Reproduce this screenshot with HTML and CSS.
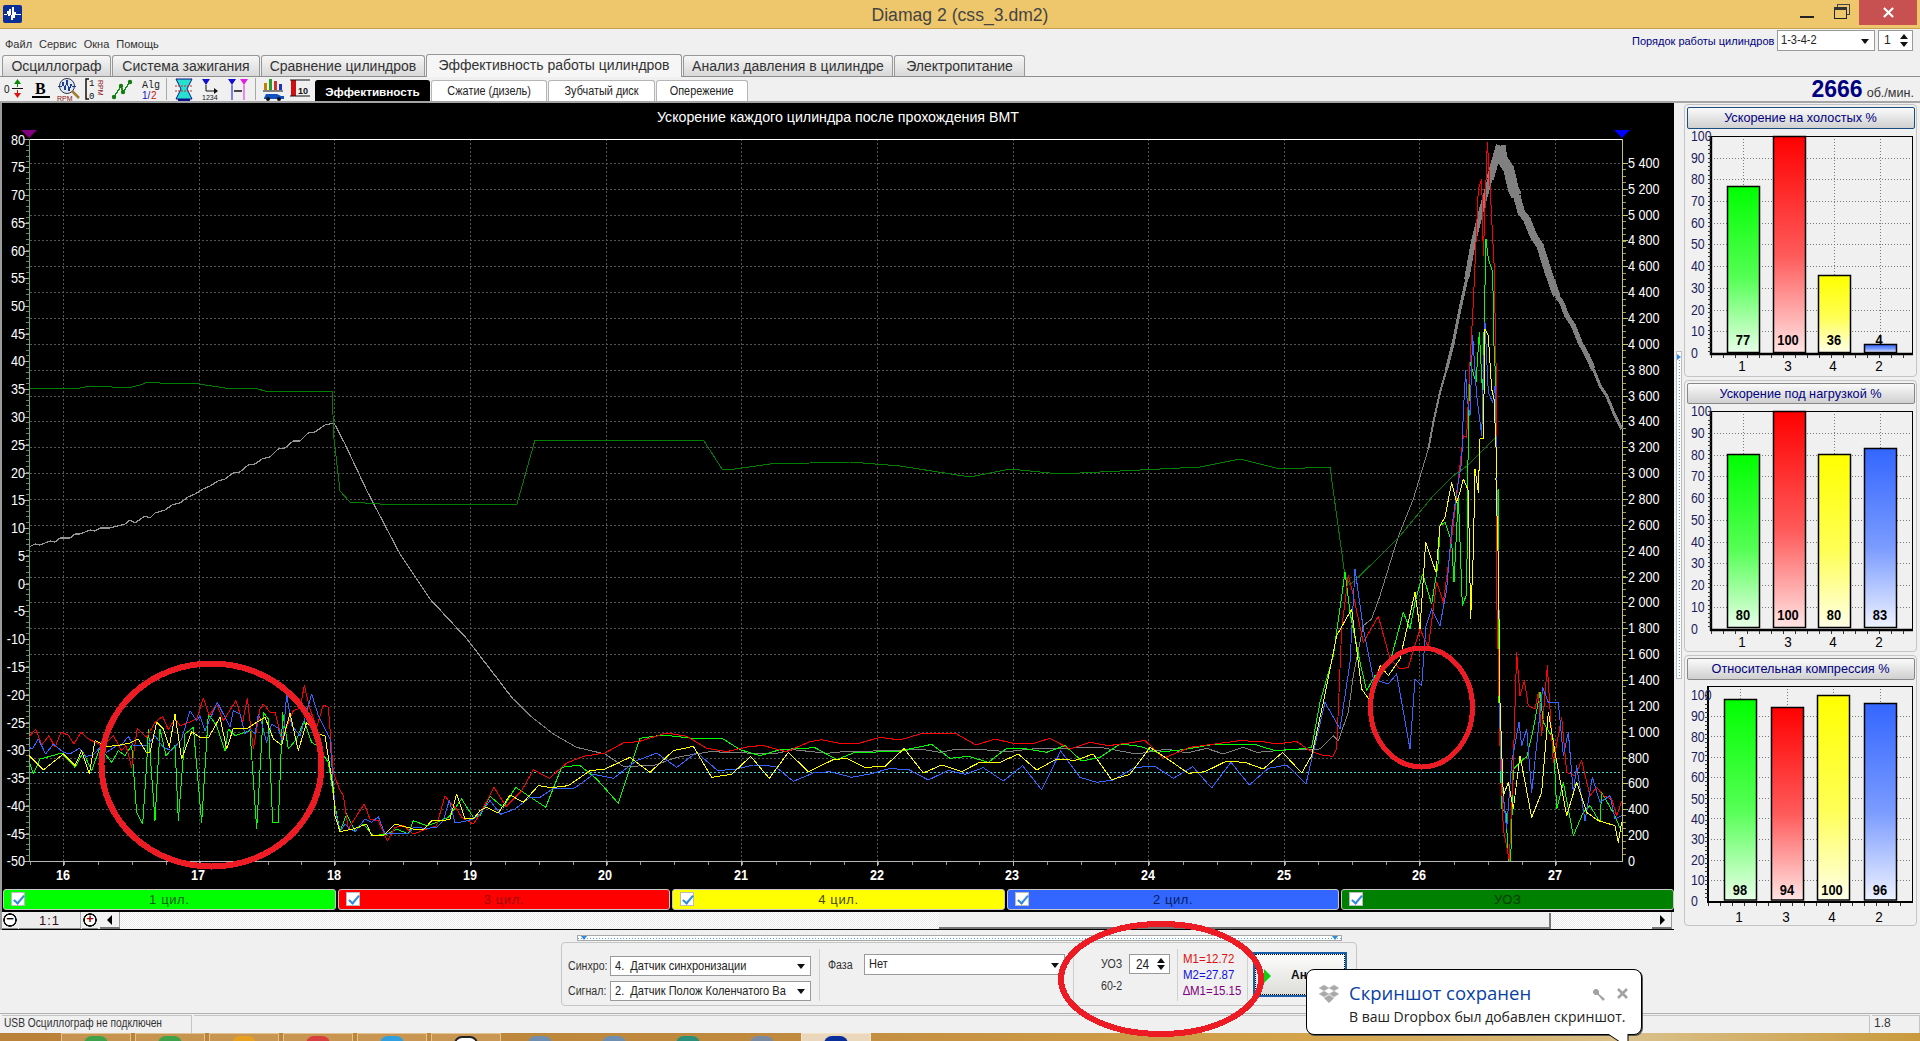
FILE: index.html
```html
<!DOCTYPE html>
<html lang="ru">
<head>
<meta charset="utf-8">
<title>Diamag 2 (css_3.dm2)</title>
<link rel="stylesheet" href="styles.css">
</head>
<body>
<div class="window">
  <header class="titlebar">
    <div class="title-left">
      <svg class="app-icon" viewBox="0 0 19 18"><rect width="19" height="18" rx="2" fill="#0a2f9a"/><polyline class="ico-wave" points="1,9 4,9 5,6 6,11 7,4 9,15 10,2 11,13 12,7 13,10 15,9 18,9"/></svg>
    </div>
    <div class="title-text">Diamag 2 (css_3.dm2)</div>
    <div class="win-controls">
      <span class="win-min"></span>
      <svg class="win-restore" viewBox="0 0 16 15"><rect x="3.5" y="0.5" width="12" height="10" fill="none" stroke="#444"/><rect x="0.5" y="3.5" width="12" height="11" fill="#eec76c" stroke="#222" stroke-width="1"/><rect x="0" y="3" width="13" height="3" fill="#333"/></svg>
      <span class="win-close"><svg viewBox="0 0 12 12"><path d="M1 1 11 11M11 1 1 11" stroke="#fff" stroke-width="2.4"/></svg></span>
    </div>
  </header>

  <div class="menubar">
    <nav class="menu"><span>Файл</span><span>Сервис</span><span>Окна</span><span>Помощь</span></nav>
    <div class="order">
      <span class="order-label">Порядок работы цилиндров</span>
      <div class="combo combo-order"><span class="nr">1-3-4-2</span></div>
      <div class="spin spin-order">1</div>
    </div>
  </div>

  <div class="tabs">
    <span class="tab t1">Осциллограф</span>
    <span class="tab t2">Система зажигания</span>
    <span class="tab t3">Сравнение цилиндров</span>
    <span class="tab t4 active">Эффективность работы цилиндров</span>
    <span class="tab t5">Анализ давления в цилиндре</span>
    <span class="tab t6">Электропитание</span>
  </div>

  <div class="toolbar">
    <svg class="tb-icon" viewBox="0 0 24 24"><text x="2" y="16" class="ic-t">0</text><path d="M10 11.500H21" stroke="#111"/><path d="M15.500 2 12 7H19Z" fill="#0a8a0a"/><path d="M15.500 10V5" stroke="#0a8a0a"/><path d="M15.500 21 12 16H19Z" fill="#e01010"/><path d="M15.500 13V17" stroke="#e01010"/></svg>
    <svg class="tb-icon" viewBox="0 0 24 24"><text x="6" y="17" class="ic-b">B</text><rect x="3" y="19" width="18" height="2" fill="#000"/></svg>
    <svg class="tb-icon" viewBox="0 0 24 24"><circle cx="11" cy="9" r="7.500" fill="#dfe8f5" stroke="#334"/><polyline class="ico-line" points="2,9 6,9 7,5 9,13 11,3 13,14 15,7 16,9 20,9"/><path d="M16 14 23 21" stroke="#a08030" stroke-width="2.5"/><text x="1" y="24" class="ic-r">RPM</text></svg>
    <svg class="tb-icon" viewBox="0 0 24 24"><path d="M6 2H3V22H6" fill="none" stroke="#111" stroke-width="1.5"/><text x="6" y="9" class="ic-s">1</text><text x="6" y="22" class="ic-s">0</text><text x="15" y="3" class="ic-v" transform="rotate(90 15 3)">RPM</text></svg>
    <svg class="tb-icon" viewBox="0 0 24 24"><polyline class="ico-green" points="4,20 11,9 13,15 20,5"/><circle cx="4" cy="20" r="2.200" fill="#137a13"/><circle cx="11" cy="9" r="2.200" fill="#137a13"/><circle cx="13" cy="15" r="2.200" fill="#137a13"/><circle cx="20" cy="5" r="2.200" fill="#137a13"/></svg>
    <svg class="tb-icon" viewBox="0 0 24 24"><text x="5" y="11" class="ic-a">Alg</text><text x="5" y="22" class="ic-n">1/</text><text x="14" y="22" class="ic-n2">2</text></svg>
    <span class="tb-sep"></span>
    <svg class="tb-icon" viewBox="0 0 24 24"><path d="M4 2H20L15 12 20 22H4L9 12Z" fill="#28e0d0" stroke="#118"/><path d="M3 9H21M3 14H21" stroke="#c03030" stroke-dasharray="2 1"/><path d="M6 23H18" stroke="#118" stroke-width="2"/></svg>
    <svg class="tb-icon" viewBox="0 0 24 24"><path d="M3 2H11L7 8Z" fill="#1010d0"/><path d="M7 8V14H18" stroke="#111" fill="none"/><path d="M15 11 19 14 15 17Z" fill="#111"/><text x="3" y="23" class="ic-k">1234</text></svg>
    <svg class="tb-icon" viewBox="0 0 24 24"><path d="M2 2H10L6 8Z" fill="#1010d0"/><path d="M14 2H22L18 8Z" fill="#e020e0"/><path d="M6 8V23" stroke="#1010d0"/><path d="M18 8V23" stroke="#e020e0"/><path d="M8 14H16" stroke="#111" stroke-width="1.5"/></svg>
    <span class="tb-sep"></span>
    <svg class="tb-icon" viewBox="0 0 24 24"><rect x="3" y="6" width="3" height="7" fill="#c08000"/><rect x="8" y="2" width="3" height="11" fill="#2a9a2a"/><rect x="13" y="4" width="3" height="9" fill="#d03030"/><rect x="18" y="7" width="3" height="6" fill="#2030c0"/><path d="M2 14H22" stroke="#111"/><path d="M3 21 5 17H16L20 19H23V22H3Z" fill="#1050c0"/><circle cx="7" cy="22" r="2" fill="#111"/><circle cx="18" cy="22" r="2" fill="#111"/></svg>
    <svg class="tb-icon" viewBox="0 0 24 24"><rect x="3" y="3" width="5" height="16" fill="#d01010"/><path d="M2 3H22M2 19H22" stroke="#111"/><text x="10" y="17" class="ic-10">10</text></svg>
    <div class="subtabs">
      <span class="subtab sel">Эффективность</span>
      <span class="subtab s2"><span class="nc">Сжатие (дизель)</span></span>
      <span class="subtab s3"><span class="nc">Зубчатый диск</span></span>
      <span class="subtab s4"><span class="nc">Опережение</span></span>
    </div>
    <div class="rpm"><b>2666</b><span>об./мин.</span></div>
  </div>

  <div class="workspace">
    <div class="left">
      <section class="chart-frame">
        <svg class="main-chart" viewBox="2 104 1672 786" width="1672" height="786">
          <text x="838" y="123" class="chart-title" textLength="362" lengthAdjust="spacingAndGlyphs">Ускорение каждого цилиндра после прохождения ВМТ</text>
          <path class="grid" d="M30 164H1622M30 190H1622M30 216H1622M30 241H1622M30 267H1622M30 293H1622M30 319H1622M30 345H1622M30 371H1622M30 397H1622M30 422H1622M30 448H1622M30 474H1622M30 500H1622M30 526H1622M30 552H1622M30 578H1622M30 603H1622M30 629H1622M30 655H1622M30 681H1622M30 707H1622M30 733H1622M30 759H1622M30 784H1622M30 810H1622M30 836H1622"/>
          <path class="grid" d="M63.5 140V862M199.5 140V862M334.5 140V862M470.5 140V862M606.5 140V862M741.5 140V862M877.5 140V862M1013.5 140V862M1148.5 140V862M1284.5 140V862M1419.5 140V862M1555.5 140V862"/>
          <path class="cyan" d="M30 773.5H1622"/>
          <path class="top-axis" d="M29 140.5H1623"/>
          <path class="bottom-axis" d="M29 862.5H1623"/>
          <path class="tick-x" d="M30 864H1622"/>
          <path class="tick-x-major" d="M63.5 863V867M199.5 863V867M334.5 863V867M470.5 863V867M606.5 863V867M741.5 863V867M877.5 863V867M1013.5 863V867M1148.5 863V867M1284.5 863V867M1419.5 863V867M1555.5 863V867"/>
          <path class="axis-left" d="M29.5 140V862"/>
          <path class="axis-right" d="M1622.5 140V862"/>
          <path class="tick-left" d="M27.5 140V862"/>
          <path class="tick-left-major" d="M24 140.5H29M24 168.5H29M24 196.5H29M24 224.5H29M24 252.5H29M24 279.5H29M24 307.5H29M24 335.5H29M24 362.5H29M24 390.5H29M24 418.5H29M24 446.5H29M24 474.5H29M24 501.5H29M24 529.5H29M24 557.5H29M24 585.5H29M24 612.5H29M24 640.5H29M24 668.5H29M24 696.5H29M24 724.5H29M24 751.5H29M24 779.5H29M24 807.5H29M24 835.5H29M24 862.5H29"/>
          <path class="tick-right" d="M1624.5 164V862"/>
          <path class="tick-right-major" d="M1623 164.5H1628M1623 190.5H1628M1623 216.5H1628M1623 241.5H1628M1623 267.5H1628M1623 293.5H1628M1623 319.5H1628M1623 345.5H1628M1623 371.5H1628M1623 397.5H1628M1623 422.5H1628M1623 448.5H1628M1623 474.5H1628M1623 500.5H1628M1623 526.5H1628M1623 552.5H1628M1623 578.5H1628M1623 603.5H1628M1623 629.5H1628M1623 655.5H1628M1623 681.5H1628M1623 707.5H1628M1623 733.5H1628M1623 759.5H1628M1623 784.5H1628M1623 810.5H1628M1623 836.5H1628"/>
          <polygon class="mark-left" points="21,131 37,131 29,139"/>
          <polygon class="mark-right" points="1614,131 1630,131 1622,139"/>

          <g class="ylab">
            <text x="25" y="146">80</text><text x="25" y="173">75</text><text x="25" y="201">70</text><text x="25" y="229">65</text><text x="25" y="257">60</text><text x="25" y="284">55</text><text x="25" y="312">50</text><text x="25" y="340">45</text><text x="25" y="367">40</text><text x="25" y="395">35</text><text x="25" y="423">30</text><text x="25" y="451">25</text><text x="25" y="479">20</text><text x="25" y="506">15</text><text x="25" y="534">10</text><text x="25" y="562">5</text><text x="25" y="590">0</text><text x="25" y="617">-5</text><text x="25" y="645">-10</text><text x="25" y="673">-15</text><text x="25" y="701">-20</text><text x="25" y="729">-25</text><text x="25" y="756">-30</text><text x="25" y="784">-35</text><text x="25" y="812">-40</text><text x="25" y="840">-45</text><text x="25" y="867">-50</text>
          </g>
          <g class="yrlab">
            <text x="1628" y="169">5 400</text><text x="1628" y="195">5 200</text><text x="1628" y="221">5 000</text><text x="1628" y="246">4 800</text><text x="1628" y="272">4 600</text><text x="1628" y="298">4 400</text><text x="1628" y="324">4 200</text><text x="1628" y="350">4 000</text><text x="1628" y="376">3 800</text><text x="1628" y="402">3 600</text><text x="1628" y="427">3 400</text><text x="1628" y="453">3 200</text><text x="1628" y="479">3 000</text><text x="1628" y="505">2 800</text><text x="1628" y="531">2 600</text><text x="1628" y="557">2 400</text><text x="1628" y="583">2 200</text><text x="1628" y="608">2 000</text><text x="1628" y="634">1 800</text><text x="1628" y="660">1 600</text><text x="1628" y="686">1 400</text><text x="1628" y="712">1 200</text><text x="1628" y="738">1 000</text><text x="1628" y="764">800</text><text x="1628" y="789">600</text><text x="1628" y="815">400</text><text x="1628" y="841">200</text><text x="1628" y="867">0</text>
          </g>
          <g class="xlab">
            <text x="63" y="881">16</text><text x="198" y="881">17</text><text x="334" y="881">18</text><text x="470" y="881">19</text><text x="605" y="881">20</text><text x="741" y="881">21</text><text x="877" y="881">22</text><text x="1012" y="881">23</text><text x="1148" y="881">24</text><text x="1284" y="881">25</text><text x="1419" y="881">26</text><text x="1555" y="881">27</text>
          </g>

          <!-- speed trace -->
          <polyline class="l-gray lite" points="29,548 35,545 40,546 50,542 55,543 60,539 70,539 75,535 80,535 90,531 95,532 100,529 110,529 118,527 125,525 130,521 135,524 145,517 150,519 155,514 165,511 172,506 180,504 188,498 195,495 203,490 210,487 218,482 225,480 233,474 240,473 248,466 255,465 262,460 270,458 278,450 285,449 293,442 300,442 308,434 315,433 325,426 334,424 345,445 367,492 400,555 430,600 467,640 500,683 513,700"/>
          <g transform="translate(480 700) scale(.33333)"><polyline class="l-gray" points="100,0 150,50 220,105 290,145 375,165 430,202 520,200 590,175 690,158 800,162 880,165 940,152 1040,163 1100,157 1260,155"/></g>
          <g transform="translate(900 700) scale(.33333)"><polyline class="l-gray" points="0,155 60,150 120,160 160,152 250,152 320,158 395,150 480,148 600,145 710,165 800,150 860,162 920,148 970,165 1030,145 1070,160 1170,152 1260,150"/></g>
          <g transform="translate(1300 130) scale(.33333)">
            <polyline class="l-gray" points="60,1860 100,1820 115,1835 145,1750 160,1640 190,1490 215,1470 240,1400 280,1270 300,1210 340,1110 385,960"/>
            <polyline class="l-gray w2" points="385,960 400,880 420,790 440,720"/>
            <polyline class="l-gray w3" points="440,720 460,640 480,540 500,450"/>
            <polyline class="l-gray w4" points="500,450 520,340 545,240 570,150"/>
            <polyline class="l-gray w6" points="570,150 590,80 600,50"/>
            <polyline class="l-gray w9" points="600,50 606,90 626,120 640,180 650,200"/>
            <polyline class="l-gray w6" points="650,200 664,250 680,270 700,320 720,350 745,430 770,500"/>
            <polyline class="l-gray w4" points="770,500 785,520 800,560 820,590 840,640 862,680 880,720"/>
            <polyline class="l-gray w3" points="880,720 900,770 920,800 945,860 965,900"/>
          </g>
          <!-- ignition timing -->
          <polyline class="l-dgreen" points="30,389 80,389 85,388 95,387 128,389 140,386 148,383 160,384 195,384 205,386 232,390 255,389 268,393 285,392 332,392 334,440 340,492 350,503 380,505 517,505 535,441 704,442 722,470 735,470 770,465 850,463 900,467 970,478 1010,470 1060,475 1120,472 1200,468 1240,460 1280,470 1330,468 1345,577 1350,586 1377,560 1400,537 1433,497 1453,477 1467,467 1497,437"/>

          <g transform="translate(0 640) scale(.33333)">
            <polyline class="l-green" points="88,370 100,405 120,360 150,352 185,342 225,385 250,340 275,395 300,325 335,370 355,335 375,350 395,320 410,520 428,555 440,375 445,270 465,545 480,270 498,350 525,320 535,545 555,285 580,265 605,550 625,225 650,260 675,335 685,270 705,290 750,275 770,570 790,220 805,240 818,550 835,550 848,220 865,330 890,300 912,245 935,310 950,320 985,370 1005,500 1020,578 1040,525 1065,575 1090,555 1120,590 1160,585 1190,570 1225,585 1240,545 1280,560 1310,550 1345,535 1385,480 1420,535 1440,530"/>
            <polyline class="l-red" points="88,293 107,270 125,318 147,290 165,325 183,280 205,288 222,315 243,280 262,298 285,310 310,320 340,290 365,335 378,320 395,385 412,268 440,295 465,250 488,232 505,272 525,238 540,260 562,252 590,240 610,178 628,230 650,195 670,245 708,185 728,250 742,178 760,330 780,210 790,195 812,222 825,220 845,300 880,215 900,208 913,140 930,210 950,265 970,198 985,205 1000,400 1018,450 1030,470 1045,570 1070,530 1093,495 1110,540 1135,545 1162,606 1185,565 1210,560 1240,585 1280,570 1310,560 1335,470 1350,490 1370,510 1385,535 1420,555 1440,525"/>
            <polyline class="l-blue" points="88,325 97,330 115,300 137,345 160,315 190,340 210,345 238,328 258,352 280,348 300,325 320,340 350,320 365,318 385,292 400,320 440,320 465,290 490,325 515,335 545,300 570,215 590,245 600,232 615,275 630,240 652,190 670,225 690,265 700,215 720,225 735,285 750,270 765,285 775,225 785,250 800,310 815,255 835,268 848,310 860,165 875,260 900,290 935,165 955,230 975,270 990,300 1005,510 1020,578 1035,555 1050,570 1065,578 1095,540 1115,550 1135,533 1155,585 1195,583 1225,585 1240,565 1280,568 1310,565 1330,545 1348,483 1365,552 1390,548 1420,540 1440,525"/>
            <polyline class="l-yellow" points="88,350 130,393 190,345 225,380 245,335 268,405 285,305 320,322 350,320 390,312 415,300 440,342 450,340 470,250 490,270 508,325 525,225 545,360 575,278 600,295 625,297 660,235 680,330 700,268 740,270 770,250 795,235 820,300 845,318 870,222 895,335 920,250 950,285 975,290 1000,450 1005,530 1020,578 1060,570 1100,555 1115,590 1150,590 1185,555 1240,570 1270,573 1295,545 1330,545 1350,540 1370,465 1395,540 1420,540 1440,515"/>
          </g>
          <g transform="translate(480 700) scale(.33333)">
            <polyline class="l-green" points="0,350 30,292 70,325 107,265 145,290 197,325 245,205 298,198 350,240 415,313 480,118 550,108 640,118 730,120 780,152 840,170 900,152 1005,146 1070,182 1120,162 1260,156"/>
            <polyline class="l-red" points="0,345 42,265 78,322 125,275 160,212 208,238 260,192 310,172 375,162 430,132 475,128 560,102 620,112 680,148 740,158 810,142 850,140 920,158 990,128 1025,122 1090,135 1140,132 1200,115 1260,123"/>
            <polyline class="l-blue" points="0,345 30,305 62,346 105,330 150,295 180,295 220,268 285,267 340,226 400,238 470,185 530,162 590,205 650,160 712,214 760,212 820,198 885,202 940,247 1000,222 1050,218 1115,235 1170,225 1230,208 1260,211"/>
            <polyline class="l-yellow" points="0,335 20,325 55,342 90,288 130,310 175,260 215,266 265,260 330,215 375,210 450,175 510,220 580,155 640,142 695,235 755,226 812,172 868,238 925,160 985,218 1060,182 1100,178 1155,205 1215,202 1260,160"/>
          </g>
          <g transform="translate(900 700) scale(.33333)">
            <polyline class="l-green" points="0,156 95,136 150,178 205,172 265,190 320,148 380,150 440,160 495,140 545,186 600,175 660,135 720,142 770,160 850,152 930,138 1060,135 1125,155 1225,148"/>
            <polyline class="l-red" points="0,123 60,105 170,105 228,138 285,120 340,133 395,135 450,118 510,150 570,130 625,140 680,133 735,124 790,178 870,145 930,137 1020,125 1090,128 1130,135 1190,127 1230,155 1265,168 1300,172"/>
            <polyline class="l-blue" points="0,211 25,211 85,243 145,214 195,226 250,206 310,246 368,200 425,273 482,156 540,235 590,250 640,243 705,205 765,202 820,238 878,203 935,267 993,190 1048,258 1105,208 1160,198 1218,255"/>
            <polyline class="l-yellow" points="0,160 12,148 70,222 125,198 185,218 235,192 300,190 355,165 410,213 470,180 525,184 580,165 635,242 690,226 750,145 800,178 865,223 915,218 978,187 1035,190 1090,210 1148,160 1205,222"/>
          </g>
          <g transform="translate(1300 130) scale(.33333)">
            <polyline class="l-green" points="25,1855 35,1855 60,1720 100,1580 135,1330 150,1450 180,1600 200,1685 225,1640 270,1600 310,1450 330,1500 345,1420 368,1335 395,1425 415,1300 420,1190 435,1180 455,1240 462,1360 475,1100 487,1430 500,1395 505,900 510,700 528,760 538,610 548,800 558,330 565,390 578,430 582,650 590,810 590,1090 595,1080 595,1640 605,2040 618,2050 625,2195 632,2195 640,1920 670,1890 680,1885 700,1800 720,1690 730,1780 760,1830 770,2040 790,1960 820,2120 850,2050 870,2030 900,2080 905,1990 945,2060 965,2110"/>
            <polyline class="l-red" points="100,1880 110,1860 125,1500 145,1340 160,1400 190,1540 235,1462 270,1590 300,1620 325,1615 360,1500 385,1555 410,1360 430,1420 450,1270 470,1100 490,920 500,925 510,700 520,520 535,180 545,150 550,380 562,40 570,170 582,400 590,800 590,1400 595,1600 600,1850 610,2100 628,2195 640,1900 650,1570 660,1700 673,1655 685,1730 705,1740 715,1690 725,1820 742,1610 760,1900 785,1765 800,1930 825,1940 845,1895 870,2000 890,1975 910,2000 935,2010 950,2060 965,2015"/>
            <polyline class="l-blue" points="18,1965 35,1890 75,1720 120,1800 150,1600 165,1320 190,1500 220,1650 265,1665 290,1635 330,1860 345,1650 365,1670 378,1490 395,1440 420,1490 440,1380 455,1200 470,1090 485,1000 490,850 497,725 500,800 510,860 518,620 530,800 545,920 555,580 565,790 578,820 585,770 590,1020 598,1500 600,1800 605,1950 620,2100 635,1900 657,1780 665,1850 680,1800 695,1990 715,1800 728,1675 745,1720 775,1720 790,1880 805,1810 820,1990 830,1910 855,2075 877,1945 900,2020 930,2000 945,2070 965,2060"/>
            <polyline class="l-yellow" points="5,1932 35,1880 70,1720 110,1520 155,1440 185,1680 210,1715 240,1610 265,1640 300,1590 345,1390 360,1500 377,1240 408,1330 420,1190 435,1165 455,1060 470,1120 480,1090 490,1050 505,1085 512,1470 520,1270 525,1020 535,1090 540,930 550,930 555,600 565,620 575,780 582,810 590,1000 588,1050 595,1300 600,1720 610,2000 625,1960 640,2040 660,1880 695,2065 725,1990 745,1750 765,1870 800,2060 830,1960 860,2050 895,2075 945,2090 955,2140 965,2080"/>
          </g>
          <ellipse class="ring" cx="211.5" cy="766" rx="110" ry="101.5"/>
          <ellipse class="ring ring2" cx="1421.5" cy="708.5" rx="51" ry="59.5"/>
        </svg>
        <div class="legend">
          <label class="lg lg-green"><i class="chk"></i><span>1 цил.</span></label>
          <label class="lg lg-red"><i class="chk"></i><span>3 цил.</span></label>
          <label class="lg lg-yellow"><i class="chk"></i><span>4 цил.</span></label>
          <label class="lg lg-blue"><i class="chk"></i><span>2 цил.</span></label>
          <label class="lg lg-dgreen"><i class="chk"></i><span>УОЗ</span></label>
        </div>
        <div class="scrollrow">
          <span class="round-btn">&#8722;</span>
          <span class="scale-box">1:1</span>
          <span class="round-btn plus">+</span>
          <span class="arrow-btn arr-left"></span>
          <span class="track track-l"></span>
          <span class="thumb"></span>
          <span class="track track-r"></span>
          <span class="arrow-btn arr-right"></span>
        </div>
      </section>

      <div class="split-h"><i class="arr-d"></i><i class="arr-d"></i></div>

      <section class="controls">
        <div class="c-sec c-signal">
          <div class="c-row"><span class="c-lab nr">Синхро:</span><div class="combo combo-sig"><span class="nr">4.&nbsp; Датчик синхронизации</span></div></div>
          <div class="c-row"><span class="c-lab nr">Сигнал:</span><div class="combo combo-sig"><span class="nr">2.&nbsp; Датчик Полож Коленчатого Ва</span></div></div>
        </div>
        <div class="c-sec c-phase">
          <span class="c-lab nr phase-lab">Фаза</span>
          <div class="combo combo-phase"><span class="nr">Нет</span></div>
        </div>
        <div class="c-sec c-uoz">
          <div class="uoz-row"><span class="c-lab nr uoz-lab">УОЗ</span><div class="spin spin-uoz"><span class="nr">24</span></div></div>
          <span class="c-lab nr gear">60-2</span>
        </div>
        <div class="c-sec c-meas">
          <span class="nr m1">M1=12.72</span>
          <span class="nr m2">M2=27.87</span>
          <span class="nr m3">&#8710;M1=15.15</span>
        </div>
        <div class="c-sec c-btn">
          <div class="btn-analyze"><i class="play"></i><span>Анализ</span></div>
        </div>
      </section>
    </div>

    <div class="split-v"><i class="arr-r"></i></div>

    <aside class="right">
      <section class="card">
        <button class="card-btn focus">Ускорение на холостых %</button>
        <svg class="bars" viewBox="1685 130 231 247" width="231" height="247">
          <defs>
            <linearGradient id="gg" x1="0" y1="0" x2="0" y2="1"><stop offset="0" stop-color="#00ff00"/><stop offset=".55" stop-color="#55ff55"/><stop offset="1" stop-color="#e8ffe8"/></linearGradient>
            <linearGradient id="gr" x1="0" y1="0" x2="0" y2="1"><stop offset="0" stop-color="#ff0000"/><stop offset=".55" stop-color="#ff5a5a"/><stop offset="1" stop-color="#ffe4e4"/></linearGradient>
            <linearGradient id="gy" x1="0" y1="0" x2="0" y2="1"><stop offset="0" stop-color="#ffff00"/><stop offset=".55" stop-color="#ffff55"/><stop offset="1" stop-color="#ffffe8"/></linearGradient>
            <linearGradient id="gb" x1="0" y1="0" x2="0" y2="1"><stop offset="0" stop-color="#3366ff"/><stop offset=".55" stop-color="#7a9bff"/><stop offset="1" stop-color="#eef2ff"/></linearGradient>
          </defs>
          <path class="b-grid" d="M1711 332H1912M1711 311H1912M1711 289H1912M1711 267H1912M1711 245H1912M1711 224H1912M1711 202H1912M1711 180H1912M1711 159H1912M1743.5 137V354M1789.5 137V354M1834.5 137V354M1880.5 137V354"/>
          <rect class="b-bar" x="1727.5" y="187.5" width="32" height="166" fill="url(#gg)"/>
          <rect class="b-bar" x="1773.5" y="137.5" width="32" height="216" fill="url(#gr)"/>
          <rect class="b-bar" x="1818.5" y="276.5" width="32" height="77" fill="url(#gy)"/>
          <rect class="b-bar" x="1864.5" y="345.5" width="32" height="8" fill="url(#gb)"/>
          <path class="b-frame" d="M1912.5 137.5H1711.5V354.5H1912.5Z"/>
          <path class="b-frame-thick" d="M1711 137V355H1913"/>
          <path class="b-tick" d="M1709 137V354"/>
          <path class="b-tick-x" d="M1711 357H1912"/>
          <g class="b-ylab"><text x="1691" y="142">100</text><text x="1691" y="164">90</text><text x="1691" y="185">80</text><text x="1691" y="207">70</text><text x="1691" y="229">60</text><text x="1691" y="250">50</text><text x="1691" y="272">40</text><text x="1691" y="294">30</text><text x="1691" y="316">20</text><text x="1691" y="337">10</text><text x="1691" y="359">0</text></g>
          <g class="b-val"><text x="1743" y="346">77</text><text x="1788" y="346">100</text><text x="1834" y="346">36</text><text x="1879" y="346">4</text></g>
          <g class="b-xlab"><text x="1742" y="372">1</text><text x="1788" y="372">3</text><text x="1833" y="372">4</text><text x="1879" y="372">2</text></g>
        </svg>
      </section>
      <section class="card">
        <button class="card-btn b2">Ускорение под нагрузкой %</button>
        <svg class="bars" viewBox="1685 405 231 247" width="231" height="247">
          <path class="b-grid" d="M1711 608H1912M1711 586H1912M1711 564H1912M1711 543H1912M1711 521H1912M1711 499H1912M1711 477H1912M1711 456H1912M1711 434H1912M1743.5 412V630M1789.5 412V630M1834.5 412V630M1880.5 412V630"/>
          <rect class="b-bar" x="1727.5" y="455.5" width="32" height="173" fill="url(#gg)"/>
          <rect class="b-bar" x="1773.5" y="412.5" width="32" height="216" fill="url(#gr)"/>
          <rect class="b-bar" x="1818.5" y="455.5" width="32" height="173" fill="url(#gy)"/>
          <rect class="b-bar" x="1864.5" y="449.5" width="32" height="179" fill="url(#gb)"/>
          <path class="b-frame" d="M1912.5 412.5H1711.5V630.500H1912.5Z"/>
          <path class="b-frame-thick" d="M1711 412V631H1913"/>
          <path class="b-tick" d="M1709 412V630"/>
          <path class="b-tick-x" d="M1711 633H1912"/>
          <g class="b-ylab"><text x="1691" y="417">100</text><text x="1691" y="439">90</text><text x="1691" y="461">80</text><text x="1691" y="482">70</text><text x="1691" y="504">60</text><text x="1691" y="526">50</text><text x="1691" y="548">40</text><text x="1691" y="569">30</text><text x="1691" y="591">20</text><text x="1691" y="613">10</text><text x="1691" y="635">0</text></g>
          <g class="b-val"><text x="1743" y="621">80</text><text x="1788" y="621">100</text><text x="1834" y="621">80</text><text x="1880" y="621">83</text></g>
          <g class="b-xlab"><text x="1742" y="648">1</text><text x="1788" y="648">3</text><text x="1833" y="648">4</text><text x="1879" y="648">2</text></g>
        </svg>
      </section>
      <section class="card">
        <button class="card-btn b3">Относительная компрессия %</button>
        <svg class="bars" viewBox="1685 681 231 245" width="231" height="245">
          <path class="b-grid" d="M1708 881H1912M1708 861H1912M1708 840H1912M1708 819H1912M1708 799H1912M1708 778H1912M1708 758H1912M1708 737H1912M1708 717H1912M1740.5 687V902M1787.5 687V902M1833.5 687V902M1880.5 687V902"/>
          <rect class="b-bar" x="1724.5" y="700.5" width="32" height="200.5" fill="url(#gg)"/>
          <rect class="b-bar" x="1771.5" y="708.5" width="32" height="192.5" fill="url(#gr)"/>
          <rect class="b-bar" x="1817.5" y="696.5" width="32" height="204.5" fill="url(#gy)"/>
          <rect class="b-bar" x="1864.5" y="704.5" width="32" height="196.5" fill="url(#gb)"/>
          <path class="b-frame" d="M1912.5 687.5H1708.5V902.500H1912.5Z"/>
          <path class="b-frame-thick thin" d="M1708 687V903H1913"/>
          <path class="b-tick" d="M1706 696V902"/>
          <path class="b-tick-x" d="M1708 905H1912"/>
          <g class="b-ylab"><text x="1691" y="701">100</text><text x="1691" y="722">90</text><text x="1691" y="743">80</text><text x="1691" y="763">70</text><text x="1691" y="783">60</text><text x="1691" y="805">50</text><text x="1691" y="825">40</text><text x="1691" y="845">30</text><text x="1691" y="866">20</text><text x="1691" y="886">10</text><text x="1691" y="907">0</text></g>
          <g class="b-val"><text x="1740" y="896">98</text><text x="1787" y="896">94</text><text x="1832" y="896">100</text><text x="1880" y="896">96</text></g>
          <g class="b-xlab"><text x="1739" y="923">1</text><text x="1786" y="923">3</text><text x="1832" y="923">4</text><text x="1879" y="923">2</text></g>
        </svg>
      </section>
    </aside>
  </div>

  <footer class="statusbar">
    <span class="st st-a"><span class="nr">USB Осциллограф не подключен</span></span>
    <span class="st st-b"></span>
    <span class="st st-c">1.8</span>
  </footer>

  <div class="taskbar">
    <span class="task t-a"><i class="dot d-green"></i></span>
    <span class="task t-a"><i class="dot d-green"></i></span>
    <span class="task t-a"><i class="dot d-orange"></i></span>
    <span class="task t-a"><i class="dot d-red"></i></span>
    <span class="task t-a"><i class="dot d-sky"></i></span>
    <span class="task t-a"><i class="dot d-white"></i></span>
    <span class="task t-b"><i class="dot d-steel"></i></span>
    <span class="task t-b"><i class="dot d-steel"></i></span>
    <span class="task t-b"><i class="dot d-teal"></i></span>
    <span class="task t-b"><i class="dot d-grey"></i></span>
    <span class="task t-sel"><i class="dot d-navy"></i></span>
  </div>

  <svg class="overlay-ring" viewBox="0 0 208 124" width="208" height="124"><ellipse cx="104" cy="62" rx="100" ry="55"/></svg>

  <div class="toast">
    <svg class="toast-logo" viewBox="0 0 22 20"><path d="M6 1 11 4 6 7 1 4ZM16 1 21 4 16 7 11 4ZM6 7 11 10 6 13 1 10ZM16 7 21 10 16 13 11 10ZM11 11 16 14 11 19 6 14Z" fill="#a9a9a9" stroke="#c8c8c8" stroke-width=".6"/></svg>
    <div class="toast-body">
      <div class="toast-title">Скриншот сохранен</div>
      <div class="toast-text">В ваш Dropbox был добавлен скриншот.</div>
    </div>
    <svg class="toast-wrench" viewBox="0 0 14 14"><path d="M1 3 3 1 5 1 7 3 7 6 13 11 11 13 6 7 3 7 1 5Z" fill="#a2a2a2"/></svg>
    <svg class="toast-x" viewBox="0 0 11 11"><path d="M1 1 10 10M10 1 1 10" stroke="#a2a2a2" stroke-width="2.6"/></svg>
    <svg class="toast-tail" viewBox="0 0 22 8"><path d="M0 0 12 8H20V0" fill="#fff"/><path d="M0 0 12 8M20 8V0" stroke="#000" fill="none"/></svg>
  </div>
</div>
</body>
</html>
```
FILE: styles.css
```css
* { box-sizing: border-box; }
html, body { margin: 0; padding: 0; height: 100%; overflow: hidden; }
body { font-family: "Liberation Sans", Arial, sans-serif; font-size: 11px; color: #222; background: #f0f0f0; }
.window { position: relative; width: 1920px; height: 1041px; display: flex; flex-direction: column; background: #f0f0f0; overflow: hidden; }
.nr { display: inline-block; transform: scaleX(.85); transform-origin: left center; white-space: nowrap; }
.nc { display: inline-block; transform: scaleX(.87); transform-origin: center center; white-space: nowrap; }

/* title bar */
.titlebar { height: 29px; flex: none; display: grid; grid-template-columns: 1fr auto 1fr; background: #eec76c; border-bottom: 1px solid #c8a24e; }
.title-left { padding: 5px 0 0 3px; }
.app-icon { width: 19px; height: 18px; display: block; }
.title-text { font-size: 17.6px; line-height: 31px; color: #444; }
.win-controls { display: flex; justify-content: flex-end; align-items: flex-start; padding-right: 3px; }
.win-min { width: 14px; height: 2px; background: #222; margin: 16px 20px 0 0; }
.win-restore { width: 16px; height: 15px; margin: 4px 9px 0 0; }
.win-close { width: 58px; height: 25px; background: #c75050; display: flex; align-items: center; justify-content: center; }
.win-close svg { width: 11px; height: 11px; }
.ico-wave { stroke: #fff; stroke-width: 1; }
.ico-line { stroke: #223a90; stroke-width: 1; }
.ico-green { stroke: #1a8a1a; stroke-width: 1.5; }

/* menu row */
.menubar { height: 26px; flex: none; display: flex; justify-content: space-between; align-items: flex-start; padding-left: 5px; }
.menu { display: flex; gap: 7px; padding-top: 9px; font-size: 11px; color: #333; line-height: 13px; }
.order { display: flex; align-items: center; padding: 1px 7px 0 0; }
.order-label { color: #000080; font-size: 11px; margin-right: 5px; width: 140px; white-space: nowrap; }
.combo { position: relative; background: #fff; border: 1px solid #9a9a9a; color: #222; font-size: 13px; white-space: nowrap; overflow: hidden; }
.combo::after { content: ""; position: absolute; right: 5px; top: 50%; margin-top: -2px; border: 4px solid transparent; border-top: 5px solid #111; border-bottom: 0; }
.combo-order { width: 98px; height: 21px; line-height: 18px; padding-left: 3px; }
.spin { position: relative; background: #fff; border: 1px solid #9a9a9a; color: #222; }
.spin::before { content: ""; position: absolute; right: 4px; top: 3px; border: 4px solid transparent; border-bottom: 5px solid #111; border-top: 0; }
.spin::after { content: ""; position: absolute; right: 4px; bottom: 3px; border: 4px solid transparent; border-top: 5px solid #111; border-bottom: 0; }
.spin-order { width: 35px; height: 21px; margin-left: 3px; line-height: 18px; padding-left: 5px; font-size: 12px; }

/* tabs */
.tabs { height: 22px; flex: none; display: flex; align-items: flex-end; padding-left: 2px; border-bottom: 1px solid #8e8e8e; gap: 1px; }
.tab { height: 21px; font-size: 14px; line-height: 20px; text-align: center; color: #333; background: linear-gradient(#f6f6f6, #d8d8d8); border: 1px solid #979797; border-bottom: 0; border-radius: 3px 3px 0 0; white-space: nowrap; }
.tab.active { height: 23px; background: #f6f6f6; margin-bottom: -1px; line-height: 20px; position: relative; z-index: 1; }
.t1 { width: 109px; } .t2 { width: 148px; } .t3 { width: 164px; } .t4 { width: 256px; } .t5 { width: 210px; } .t6 { width: 131px; }

/* toolbar */
.toolbar { height: 26px; flex: none; display: flex; align-items: center; gap: 3px; padding: 0 1px 0 2px; border-bottom: 2px solid #a5a5a5; }
.tb-icon { width: 24px; height: 24px; flex: none; }
.tb-sep { width: 1px; height: 22px; margin: 0 2px; background: #a8a8a8; }
.ic-t { font: 10px "Liberation Sans", sans-serif; fill: #111; }
.ic-b { font: bold 16px "Liberation Serif", serif; fill: #000; }
.ic-r { font: 7px "Liberation Sans", sans-serif; fill: #8a1010; }
.ic-s { font: 9px "Liberation Mono", monospace; fill: #111; }
.ic-v { font: 7px "Liberation Sans", sans-serif; fill: #8a1010; }
.ic-a { font: 10px "Liberation Mono", monospace; fill: #222; }
.ic-n { font: 10px "Liberation Sans", sans-serif; fill: #1010c0; }
.ic-n2 { font: 10px "Liberation Sans", sans-serif; fill: #d01010; }
.ic-k { font: 7px "Liberation Sans", sans-serif; fill: #111; }
.ic-10 { font: bold 9px "Liberation Sans", sans-serif; fill: #111; }
.subtabs { display: flex; align-self: flex-end; gap: 1px; height: 21px; }
.subtab { background: #fff; border: 1px solid #b5b5b5; border-bottom: 0; border-radius: 3px 3px 0 0; font-size: 12.5px; line-height: 21px; text-align: center; color: #222; }
.subtab.sel { width: 115px; background: #000; border-color: #000; color: #fff; font-size: 11.7px; font-weight: bold; }
.s2 { width: 116px; } .s3 { width: 107px; } .s4 { width: 92px; }
.rpm { margin-left: auto; display: flex; align-items: baseline; gap: 4px; padding-right: 5px; }
.rpm b { font-size: 23px; color: #000080; line-height: 26px; }
.rpm span { font-size: 12.6px; color: #333; }

/* workspace */
.workspace { flex: 1; min-height: 0; display: flex; }
.left { width: 1676px; flex: none; display: flex; flex-direction: column; }
.chart-frame { width: 1676px; height: 827px; background: #000; border-left: 2px solid #9c9c9c; border-right: 2px solid #f0f0f0; display: flex; flex-direction: column; flex: none; }
.main-chart { display: block; flex: none; }
.chart-title { font: 14px "Liberation Sans", sans-serif; fill: #fff; text-anchor: middle; }
.grid { stroke: #565656; stroke-width: 1; stroke-dasharray: 2 2; fill: none; shape-rendering: crispEdges; }
.cyan { stroke: #50d8d8; stroke-width: 1; stroke-dasharray: 2 2; shape-rendering: crispEdges; }
.top-axis { stroke: #fff; stroke-width: 1; shape-rendering: crispEdges; }
.bottom-axis { stroke: #b8b8b8; stroke-width: 1; shape-rendering: crispEdges; }
.tick-x { stroke: #9a9a9a; stroke-width: 3; stroke-dasharray: 1 32.9; stroke-dashoffset: -0.2; shape-rendering: crispEdges; }
.tick-x-major { stroke: #bbb; stroke-width: 1; shape-rendering: crispEdges; }
.axis-left { stroke: #5fb05f; stroke-width: 1; shape-rendering: crispEdges; }
.axis-right { stroke: #c4c46a; stroke-width: 1; shape-rendering: crispEdges; }
.tick-left { stroke: #7a7a7a; stroke-width: 3; stroke-dasharray: 1 4.55; shape-rendering: crispEdges; }
.tick-left-major { stroke: #aaa; stroke-width: 1; shape-rendering: crispEdges; }
.tick-right { stroke: #a0a060; stroke-width: 3; stroke-dasharray: 1 5.46; shape-rendering: crispEdges; }
.tick-right-major { stroke: #c4c46a; stroke-width: 1; shape-rendering: crispEdges; }
.mark-left { fill: #800080; }
.mark-right { fill: #0000ff; }
.ylab text, .yrlab text { font: 15px "Liberation Sans", sans-serif; fill: #fff; transform-box: fill-box; }
.ylab text { text-anchor: end; transform: scaleX(.84); transform-origin: right center; }
.yrlab text { transform: scaleX(.84); transform-origin: left center; }
.xlab text { font: bold 14px "Liberation Sans", sans-serif; fill: #fff; text-anchor: middle; transform-box: fill-box; transform: scaleX(.9); transform-origin: center center; }
polyline { fill: none; vector-effect: non-scaling-stroke; shape-rendering: crispEdges; stroke-width: 1; stroke-linejoin: round; }
.l-green { stroke: #00ff00; }
.l-red { stroke: #ff0000; }
.l-blue { stroke: #3366ff; }
.l-yellow { stroke: #ffff00; }
.l-dgreen { stroke: #008000; stroke-width: 1; }
.l-gray { stroke: #808080; }
.l-gray.lite { stroke: #969696; stroke-width: 1.2; }
.l-gray.w2 { stroke-width: 2; }
.l-gray.w3 { stroke-width: 3; }
.l-gray.w4 { stroke-width: 5; }
.l-gray.w6 { stroke-width: 7.5; }
.l-gray.w9 { stroke-width: 11; }
.ring { fill: none; stroke: #ed1c24; stroke-width: 6; shape-rendering: crispEdges; }
.ring2 { stroke-width: 5; }

/* legend */
.legend { height: 23px; flex: none; display: grid; grid-template-columns: repeat(5, 1fr); gap: 2px; padding: 0 0 2px 1px; }
.lg { position: relative; display: block; border: 1px solid #c8c8c8; border-radius: 3px; text-align: center; font-size: 13px; line-height: 19px; letter-spacing: .6px; }
.lg-green { background: #00ff00; color: #0b610b; }
.lg-red { background: #ff0000; color: #9a0505; }
.lg-yellow { background: #ffff00; color: #4a4a00; }
.lg-blue { background: #3366ff; color: #00215f; }
.lg-dgreen { background: #008000; color: #003a00; }
.chk { position: absolute; left: 7px; top: 2px; width: 14px; height: 14px; background: #fff; border: 1px solid #bbb; }
.chk::after { content: ""; position: absolute; left: 4px; top: 0; width: 4px; height: 9px; border: solid #2f8ae0; border-width: 0 2px 2px 0; transform: rotate(40deg); }

/* scroller row */
.scrollrow { height: 17px; flex: none; display: flex; background: #f0f0f0; align-items: stretch; }
.round-btn { width: 16px; height: 17px; font: bold 13px/14px "Liberation Sans", sans-serif; color: #000; text-align: center; background: radial-gradient(circle at 50% 50%, #fff 0 5px, #111 5.5px 6.5px, transparent 7px), #eee; border-bottom: 1px solid #888; }
.round-btn.plus { color: #900; margin-left: 1px; }
.scale-box { width: 62px; margin-left: 1px; text-align: center; font: 13px/17px "Liberation Sans", sans-serif; color: #3a0a1a; letter-spacing: 1px; background: #ececec; border-bottom: 1px solid #888; border-right: 1px solid #aaa; }
.arrow-btn { position: relative; width: 20px; background: #f2f2f2; border-bottom: 2px solid #777; border-right: 1px solid #999; margin-left: 2px; }
.arr-left::after { content: ""; position: absolute; left: 7px; top: 3px; border: 5px solid transparent; border-right: 5px solid #000; border-left: 0; }
.arr-right { margin-left: 0; }
.arr-right::after { content: ""; position: absolute; left: 8px; top: 3px; border: 5px solid transparent; border-left: 5px solid #000; border-right: 0; }
.track { background: repeating-conic-gradient(#fff 0 25%, #ebebeb 0 50%) 0 0 / 2px 2px; }
.track-l { width: 819px; }
.thumb { width: 612px; background: #f0f0f0; border-bottom: 2px solid #777; border-right: 2px solid #777; margin-top: 1px; }
.track-r { width: 101px; }

/* bottom controls */
.split-h { width: 765px; height: 6px; margin: 5px 0 1px 577px; flex: none; border: 1px solid #a8a8a8; background: #fff linear-gradient(90deg, #4aa0ff 50%, transparent 50%) 0 50% / 3px 1px repeat-x; display: flex; justify-content: space-between; padding: 0 3px; }
.arr-d { width: 0; height: 0; border: 3px solid transparent; border-top: 4px solid #2f8ae0; border-bottom: 0; }
.controls { width: 796px; height: 64px; margin-left: 561px; flex: none; display: flex; border: 1px solid #c6c6c6; border-radius: 4px; padding: 6px 0 4px; }
.c-sec { height: 100%; border-right: 1px solid #d0d0d0; }
.c-lab { font-size: 12.5px; color: #333; }
.c-signal { width: 258px; display: flex; flex-direction: column; gap: 5px; padding: 7px 0 0 6px; }
.c-row { display: flex; align-items: center; height: 20px; }
.c-row .c-lab { width: 42px; flex: none; }
.combo-sig { width: 201px; height: 20px; line-height: 18px; padding-left: 4px; padding-right: 20px; }
.c-phase { width: 254px; display: flex; align-items: flex-start; padding: 5px 0 0 8px; }
.phase-lab { width: 36px; line-height: 22px; }
.combo-phase { width: 201px; height: 21px; line-height: 17px; padding-left: 4px; }
.c-uoz { width: 104px; padding: 5px 0 0 27px; display: flex; flex-direction: column; gap: 5px; }
.uoz-row { display: flex; align-items: center; }
.uoz-lab { width: 28px; flex: none; }
.spin-uoz { width: 41px; height: 20px; font-size: 14px; line-height: 18px; padding-left: 6px; }
.gear { align-self: flex-start; }
.c-meas { width: 70px; display: flex; flex-direction: column; align-items: flex-start; gap: 3px; padding: 3px 0 0 5px; font-size: 13.5px; line-height: 13px; }
.m1 { color: #e01010; } .m2 { color: #1010e0; } .m3 { color: #800080; }
.c-btn { flex: 1; border-right: 0; padding: 3px 9px 0 5px; }
.btn-analyze { position: relative; height: 45px; border: 2px solid #1b5ea8; outline: 1px dotted #111; outline-offset: -3px; background: linear-gradient(#fdfdfd, #dcdcd8); display: flex; align-items: center; padding-left: 36px; font-size: 12px; font-weight: bold; color: #111; }
.play { position: absolute; left: 9px; top: 15px; border: 7px solid transparent; border-left: 7px solid #10d010; border-right: 0; }

/* right side */
.split-v { width: 6px; height: 328px; margin: 248px 2px 0 0; flex: none; background: #fff; border: 1px solid #bdbdbd; position: relative; }
.split-v::after { content: ""; position: absolute; left: 1px; right: 1px; top: 8px; bottom: 0; background: linear-gradient(#4aa0ff 50%, transparent 50%) center 0 / 1px 3px repeat-y; }
.arr-r { position: absolute; left: 0; top: 2px; border: 3px solid transparent; border-left: 4px solid #2f8ae0; border-right: 0; }
.right { width: 233px; flex: none; padding-top: 1px; display: flex; flex-direction: column; gap: 3px; }
.card { border: 1px solid #c4c4c4; border-radius: 4px; padding-top: 2px; display: flex; flex-direction: column; align-items: center; }
.bars { display: block; }
.card-btn { width: 228px; height: 22px; padding: 0; border: 1px solid #888; border-radius: 2px; background: linear-gradient(#fafafa, #d0d0d0); color: #000080; font: 12.7px "Liberation Sans", sans-serif; }
.card-btn.focus { border: 1px solid #1a4e80; }
.card-btn.b2 { height: 21px; }
.b-grid { stroke: #7a7a7a; stroke-dasharray: 1 2; fill: none; shape-rendering: crispEdges; }
.b-bar { stroke: #000; stroke-width: 1.5; }
.b-frame { stroke: #000; stroke-width: 1; fill: none; shape-rendering: crispEdges; }
.b-frame-thick { stroke: #000; stroke-width: 2.4; fill: none; }
.b-frame-thick.thin { stroke-width: 2; }
.b-tick { stroke: #333; stroke-width: 3; stroke-dasharray: 1 3.3; shape-rendering: crispEdges; }
.b-tick-x { stroke: #333; stroke-width: 3; stroke-dasharray: 1 11; shape-rendering: crispEdges; }
.b-ylab text { font: 14.5px "Liberation Sans", sans-serif; fill: #1d1d5c; transform-box: fill-box; transform: scaleX(.85); transform-origin: left center; }
.b-val text { font: bold 14px "Liberation Sans", sans-serif; fill: #000; text-anchor: middle; transform-box: fill-box; transform: scaleX(.92); transform-origin: center center; }
.b-xlab text { font: 15px "Liberation Sans", sans-serif; fill: #000; text-anchor: middle; transform-box: fill-box; transform: scaleX(.9); transform-origin: center center; }

/* status */
.statusbar { height: 20px; flex: none; display: flex; border-top: 1px solid #b0b0b0; padding: 1px 0 0 2px; gap: 2px; font-size: 11px; color: #333; line-height: 15px; }
.st { border: 1px solid #c4c4c4; border-width: 1px 1px 0 0; padding-left: 2px; }
.st-a { width: 190px; font-size: 12px; white-space: nowrap; }
.st-b { flex: 1; }
.st-c { width: 48px; font-size: 12px; }

/* taskbar */
.taskbar { height: 8px; flex: none; display: flex; gap: 4px; padding-left: 61px; background: linear-gradient(90deg, #b98238 0, #c08a3e 40%, #d5a64d 70%, #d9c08a 85%, #c99a3c 100%); overflow: hidden; }
.task { width: 70px; height: 8px; border: 1px solid rgba(255,240,210,.5); border-bottom: 0; background: rgba(255,230,190,.18); display: flex; justify-content: center; }
.t-b { background: transparent; border-color: transparent; }
.t-sel { background: rgba(255,255,255,.65); }
.dot { width: 24px; height: 12px; margin-top: 2px; border-radius: 8px 8px 0 0; display: block; }
.d-green { background: #3fa24a; } .d-orange { background: #e8a020; } .d-red { background: #d84040; }
.d-sky { background: #30a0e0; } .d-white { background: #fff; border: 2px solid #222; }
.d-steel { background: #6f8fb0; } .d-teal { background: #2b8f7a; } .d-grey { background: #7a8aa0; } .d-navy { background: #0a2f9a; }

/* overlays */
.overlay-ring { position: absolute; left: 1057px; top: 917px; z-index: 5; }
.overlay-ring ellipse { fill: none; stroke: #ed1c24; stroke-width: 6; shape-rendering: crispEdges; }
.toast { position: absolute; left: 1306px; top: 969px; width: 336px; height: 66px; z-index: 6; background: #fff; border: 1px solid #000; border-radius: 8px; box-shadow: 1px 1px 0 #555; display: flex; padding: 12px 0 0 11px; }
.toast-logo { width: 22px; height: 20px; flex: none; margin-top: 2px; }
.toast-body { margin-left: 9px; }
.toast-title { font: 18.5px/22px "Open Sans", "Liberation Sans", sans-serif; color: #0a3fa5; white-space: nowrap; }
.toast-text { margin-top: 4px; font: 14px/18px "Open Sans", "Liberation Sans", sans-serif; color: #222; white-space: nowrap; }
.toast-wrench { position: absolute; left: 285px; top: 18px; width: 14px; height: 14px; }
.toast-x { position: absolute; left: 310px; top: 18px; width: 11px; height: 11px; }
.toast-tail { position: absolute; left: 301px; top: 64px; width: 22px; height: 8px; }
```
